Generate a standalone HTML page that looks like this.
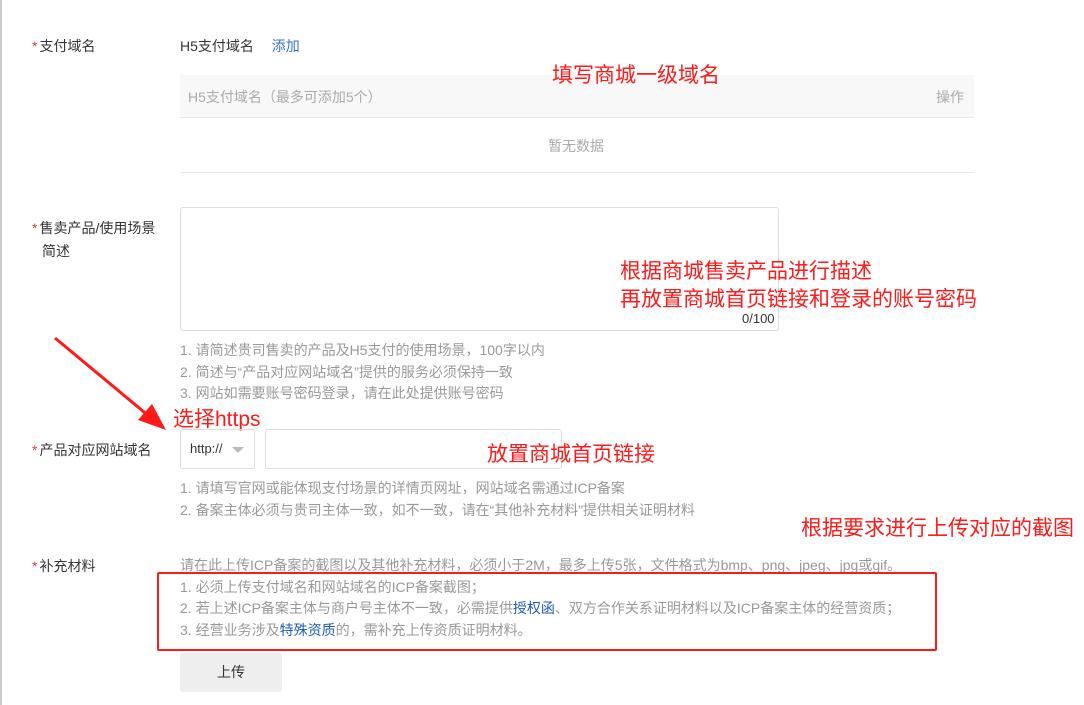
<!DOCTYPE html>
<html><head><meta charset="utf-8"><style>
body{margin:0;width:1084px;height:705px;background:#fff;position:relative;overflow:hidden;font-family:"Liberation Sans","Noto Sans CJK SC",sans-serif;}
.a{position:absolute;white-space:nowrap;}
.lbl{font-size:14px;color:#333;}
.lbl b{color:#e0393e;font-weight:normal;margin-right:2px;}
.h{font-size:14px;color:#999;line-height:21.5px;}
.red{color:#ff1a1a;font-size:21px;}
.blue{color:#1e5bb8;}
</style></head><body>
<div class="a" style="left:0;top:0;width:2px;height:705px;background:#ccc"></div>
<div class="a lbl" style="left:32px;top:36px"><b>*</b>支付域名</div>
<div class="a lbl" style="left:180px;top:36px">H5支付域名 <span style="margin-left:14px;color:#3a6fc4">添加</span></div>
<div class="a" style="left:180px;top:75px;width:794px;height:42px;background:#f8f8f8;border-bottom:1px solid #e8e8e8"></div>
<div class="a" style="left:188px;top:87px;font-size:14px;color:#aaa">H5支付域名（最多可添加5个）</div>
<div class="a" style="left:936px;top:87px;font-size:14px;color:#aaa">操作</div>
<div class="a" style="left:548px;top:136px;font-size:14px;color:#aaa">暂无数据</div>
<div class="a" style="left:180px;top:172px;width:794px;height:1px;background:#e8e8e8"></div>
<div class="a red" style="left:552px;top:59px">填写商城一级域名</div>
<div class="a lbl" style="left:32px;top:217px;line-height:23px"><b>*</b>售卖产品/使用场景<br><span style="margin-left:10px">简述</span></div>
<div class="a" style="left:180px;top:207px;width:597px;height:122px;border:1px solid #ddd;border-radius:3px"></div>
<div class="a" style="left:742px;top:311px;font-size:13px;color:#333">0/100</div>
<div class="a red" style="left:620px;top:258px;line-height:28px">根据商城售卖产品进行描述<br>再放置商城首页链接和登录的账号密码</div>
<div class="a h" style="left:180px;top:340px">1. 请简述贵司售卖的产品及H5支付的使用场景，100字以内<br>2. 简述与“产品对应网站域名”提供的服务必须保持一致<br>3. 网站如需要账号密码登录，请在此处提供账号密码</div>
<div class="a red" style="left:173px;top:403px">选择https</div>
<svg class="a" style="left:0;top:0" width="200" height="440"><line x1="55" y1="338" x2="150" y2="417" stroke="#ff1a1a" stroke-width="3"/><polygon points="166,430 138,420 152,404" fill="#ff1a1a"/></svg>
<div class="a lbl" style="left:32px;top:440px"><b>*</b>产品对应网站域名</div>
<div class="a" style="left:180px;top:429px;width:73px;height:38px;border:1px solid #ddd;border-radius:3px"></div>
<div class="a" style="left:190px;top:441px;font-size:13px;color:#333">http://</div>
<div class="a" style="left:232px;top:447px;width:0;height:0;border-left:6px solid transparent;border-right:6px solid transparent;border-top:6px solid #bbb"></div>
<div class="a" style="left:265px;top:429px;width:295px;height:38px;border:1px solid #ddd;border-radius:3px"></div>
<div class="a red" style="left:487px;top:438px">放置商城首页链接</div>
<div class="a h" style="left:180px;top:478px">1. 请填写官网或能体现支付场景的详情页网址，网站域名需通过ICP备案<br>2. 备案主体必须与贵司主体一致，如不一致，请在“其他补充材料”提供相关证明材料</div>
<div class="a red" style="left:801px;top:512px">根据要求进行上传对应的截图</div>
<div class="a lbl" style="left:32px;top:556px"><b>*</b>补充材料</div>
<div class="a h" style="left:180px;top:555px">请在此上传ICP备案的截图以及其他补充材料，必须小于2M，最多上传5张，文件格式为bmp、png、jpeg、jpg或gif。<br>1. 必须上传支付域名和网站域名的ICP备案截图；<br>2. 若上述ICP备案主体与商户号主体不一致，必需提供<span class="blue">授权函</span>、双方合作关系证明材料以及ICP备案主体的经营资质；<br>3. 经营业务涉及<span class="blue">特殊资质</span>的，需补充上传资质证明材料。</div>
<div class="a" style="left:157px;top:572px;width:776px;height:75px;border:2px solid #ff1a1a;border-radius:2px"></div>
<div class="a" style="left:180px;top:653px;width:102px;height:39px;background:#eee;border-radius:3px;font-size:14px;color:#333;text-align:center;line-height:39px">上传</div>
</body></html>
